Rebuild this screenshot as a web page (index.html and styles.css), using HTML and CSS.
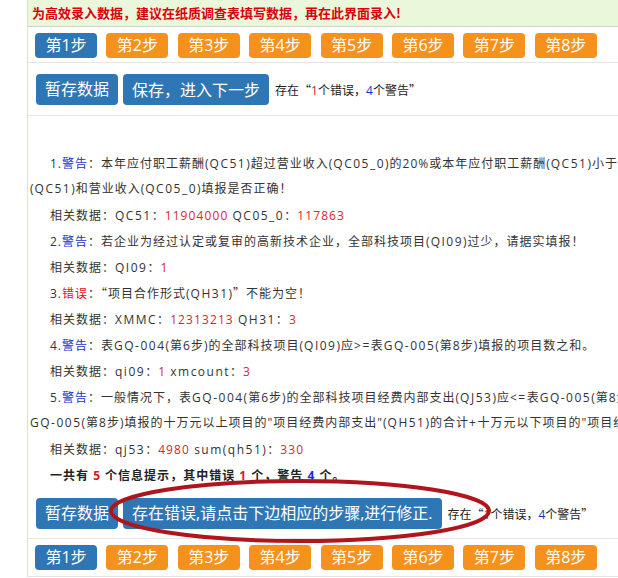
FILE: index.html
```html
<!DOCTYPE html>
<html lang="zh-CN">
<head>
<meta charset="utf-8">
<title>录入</title>
<link rel="stylesheet" href="styles.css">
</head>
<body>
<div class="page">
  <div class="notice">为高效录入数据，建议在纸质调查表填写数据，再在此界面录入!</div>
  <div class="steps">
    <span class="step cur">第1步</span>
    <span class="step">第2步</span>
    <span class="step">第3步</span>
    <span class="step">第4步</span>
    <span class="step">第5步</span>
    <span class="step">第6步</span>
    <span class="step">第7步</span>
    <span class="step">第8步</span>
  </div>
  <div class="actions top">
    <span class="btn">暂存数据</span>
    <span class="btn">保存<span class="c">，</span>进入下一步</span>
    <span class="status">存在<span class="q">“</span><span class="r">1</span>个错误<span class="c">，</span><span class="b">4</span>个警告<span class="q">”</span></span>
  </div>
  <div class="msgs">
    <p class="ln in">1.<span class="warn">警告</span><span class="c">：</span>本年应付职工薪酬(<span class="en">QC51</span>)超过营业收入(<span class="en">QC05_0</span>)的20%或本年应付职工薪酬(<span class="en">QC51</span>)小于营业收入(<span class="en">QC05_0</span>)的1%，请核实应付职工薪酬</p>
    <p class="ln">(<span class="en">QC51</span>)和营业收入(<span class="en">QC05_0</span>)填报是否正确！</p>
    <p class="ln in">相关数据<span class="c">：</span><span class="en">QC51</span><span class="c">：</span><span class="num">11904000</span> <span class="en">QC05_0</span><span class="c">：</span><span class="num">117863</span></p>
    <p class="ln in">2.<span class="warn">警告</span><span class="c">：</span>若企业为经过认定或复审的高新技术企业<span class="c">，</span>全部科技项目(<span class="en">QI09</span>)过少<span class="c">，</span>请据实填报！</p>
    <p class="ln in">相关数据<span class="c">：</span><span class="en">QI09</span><span class="c">：</span><span class="num">1</span></p>
    <p class="ln in">3.<span class="err">错误</span><span class="c">：</span><span class="q">“</span>项目合作形式(<span class="en">QH31</span>)<span class="q">”</span>不能为空！</p>
    <p class="ln in">相关数据<span class="c">：</span><span class="en">XMMC</span><span class="c">：</span><span class="num">12313213</span> <span class="en">QH31</span><span class="c">：</span><span class="num">3</span></p>
    <p class="ln in">4.<span class="warn">警告</span><span class="c">：</span>表<span class="en">GQ-004</span>(第6步)的全部科技项目(<span class="en">QI09</span>)应<span class="en">&gt;=</span>表<span class="en">GQ-005</span>(第8步)填报的项目数之和。</p>
    <p class="ln in">相关数据<span class="c">：</span><span class="en">qi09</span><span class="c">：</span><span class="num">1</span> <span class="en">xmcount</span><span class="c">：</span><span class="num">3</span></p>
    <p class="ln in">5.<span class="warn">警告</span><span class="c">：</span>一般情况下<span class="c">，</span>表<span class="en">GQ-004</span>(第6步)的全部科技项目经费内部支出(<span class="en">QJ53</span>)应<span class="en">&lt;=</span>表<span class="en">GQ-005</span>(第8步)的项目经费内部支出合计，即表</p>
    <p class="ln"><span class="en">GQ-005</span>(第8步)填报的十万元以上项目的"项目经费内部支出"(<span class="en">QH51</span>)的合计<span class="en">+</span>十万元以下项目的"项目经费内部支出"合计！</p>
    <p class="ln in">相关数据<span class="c">：</span><span class="en">qj53</span><span class="c">：</span><span class="num">4980</span> <span class="en">sum(qh51)</span><span class="c">：</span><span class="num">330</span></p>
    <p class="ln in total">一共有 <span class="r">5</span> 个信息提示<span class="c">，</span>其中错误 <span class="r">1</span> 个<span class="c">，</span>警告 <span class="b">4</span> 个。</p>
  </div>
  <div class="actions bottom">
    <span class="btn">暂存数据</span>
    <span class="btn">存在错误,请点击下边相应的步骤,进行修正.</span>
    <span class="status">存在<span class="q">“</span><span class="r">1</span>个错误<span class="c">，</span><span class="b">4</span>个警告<span class="q">”</span></span>
  </div>
  <div class="steps last">
    <span class="step cur">第1步</span>
    <span class="step">第2步</span>
    <span class="step">第3步</span>
    <span class="step">第4步</span>
    <span class="step">第5步</span>
    <span class="step">第6步</span>
    <span class="step">第7步</span>
    <span class="step">第8步</span>
  </div>
  <svg class="mark" width="386" height="70" viewBox="0 0 386 70" aria-hidden="true">
    <ellipse cx="192" cy="34" rx="189" ry="30" fill="none" stroke="#b0141c" stroke-width="4"/>
  </svg>
</div>
</body>
</html>
```
FILE: styles.css
```css
html, body {
  margin: 0;
  padding: 0;
  overflow: hidden;
  background: #ffffff;
}
body {
  width: 618px;
  height: 578px;
  font-family: "Open Sans", "Noto Sans CJK SC", sans-serif;
  color: #333333;
}
.page {
  position: relative;
  margin-left: 27px;
  width: 900px;
  border-left: 1px solid #e4e0cc;
  border-bottom: 1px solid #e4e4e4;
}
.notice {
  height: 26px;
  line-height: 26px;
  padding-left: 4px;
  background: #ebf7da;
  border-bottom: 1px solid #cfd9c2;
  color: #d8000c;
  font-family: "Noto Sans CJK SC", sans-serif;
  font-size: 13px;
  font-weight: bold;
  white-space: nowrap;
}
.steps {
  display: flex;
  gap: 9.4px;
  padding: 6px 0 4px 7px;
  border-bottom: 1px solid #e6e6e6;
}
.steps.last {
  padding: 6px 0 6px 7px;
  border-bottom: none;
}
.step {
  width: 62px;
  height: 25px;
  line-height: 25px;
  text-align: center;
  font-size: 16px;
  color: #ffffff;
  background: #f5921e;
  border-radius: 4px;
  white-space: nowrap;
}
.step.cur {
  background: #2f76b4;
}
.actions {
  display: flex;
  align-items: center;
  gap: 5px;
  padding: 11px 0 10px 8px;
  border-bottom: 1px solid #e6e6e6;
}
.actions.bottom {
  padding: 10px 0 9px 8px;
}
.btn {
  height: 31px;
  line-height: 31px;
  padding: 0 9px;
  font-size: 16px;
  color: #ffffff;
  background: #2f76b4;
  border-radius: 4px;
  white-space: nowrap;
}
.status {
  margin-left: 1px;
  font-size: 12px;
  color: #222222;
  font-family: "Noto Sans CJK SC", sans-serif;
  white-space: nowrap;
}
.status .r, .status .b {
  font-family: "Open Sans", sans-serif;
}
.q {
  font-family: "Noto Sans CJK SC", sans-serif;
}
.c {
  font-family: "Noto Sans CJK TC", "Noto Sans CJK SC", sans-serif;
}
.r { color: #e0141e; }
.b { color: #1a2fcc; }
.msgs {
  padding: 34px 0 0 2px;
}
.ln {
  margin: 0;
  height: 26px;
  line-height: 26px;
  font-size: 12px;
  letter-spacing: 1px;
  white-space: nowrap;
}
.ln.in {
  padding-left: 20px;
}
.en {
  letter-spacing: 1.5px;
}
.warn { color: #1a2fcc; }
.err { color: #e0141e; }
.num { color: #e0242c; letter-spacing: 1.1px; }
.total {
  font-weight: bold;
  color: #222222;
}
.mark {
  position: absolute;
  left: 80px;
  top: 477px;
}
```
